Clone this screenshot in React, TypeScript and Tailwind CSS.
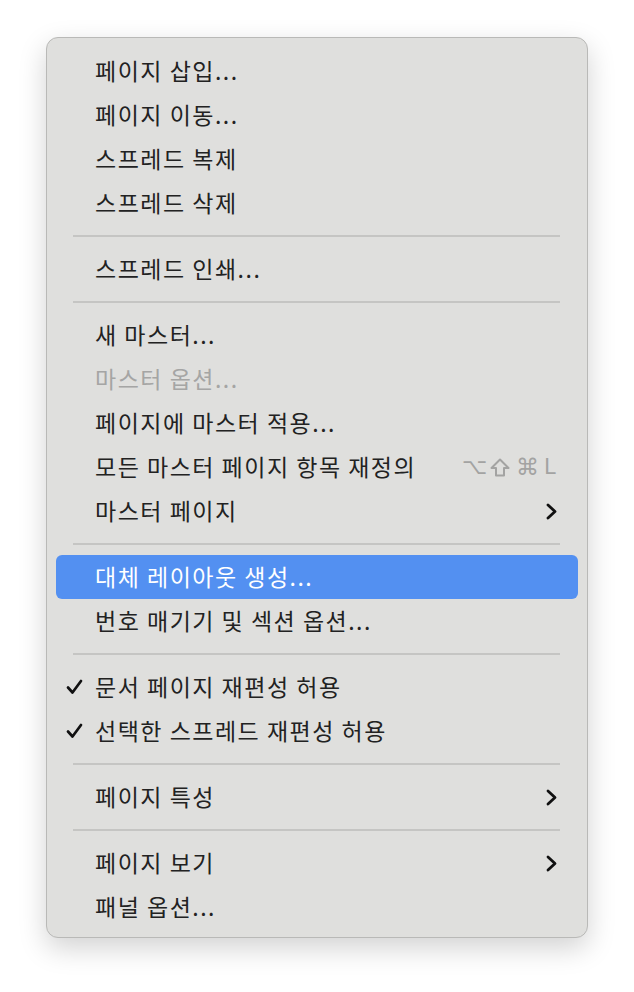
import React from 'react'

type Item =
  | { kind: 'sep' }
  | {
      kind: 'item'
      label: string
      checked?: boolean
      disabled?: boolean
      active?: boolean
      submenu?: boolean
      shortcut?: boolean
    }

const items: Item[] = [
  { kind: 'item', label: '페이지 삽입...' },
  { kind: 'item', label: '페이지 이동...' },
  { kind: 'item', label: '스프레드 복제' },
  { kind: 'item', label: '스프레드 삭제' },
  { kind: 'sep' },
  { kind: 'item', label: '스프레드 인쇄...' },
  { kind: 'sep' },
  { kind: 'item', label: '새 마스터...' },
  { kind: 'item', label: '마스터 옵션...', disabled: true },
  { kind: 'item', label: '페이지에 마스터 적용...' },
  { kind: 'item', label: '모든 마스터 페이지 항목 재정의', shortcut: true },
  { kind: 'item', label: '마스터 페이지', submenu: true },
  { kind: 'sep' },
  { kind: 'item', label: '대체 레이아웃 생성...', active: true },
  { kind: 'item', label: '번호 매기기 및 섹션 옵션...' },
  { kind: 'sep' },
  { kind: 'item', label: '문서 페이지 재편성 허용', checked: true },
  { kind: 'item', label: '선택한 스프레드 재편성 허용', checked: true },
  { kind: 'sep' },
  { kind: 'item', label: '페이지 특성', submenu: true },
  { kind: 'sep' },
  { kind: 'item', label: '페이지 보기', submenu: true },
  { kind: 'item', label: '패널 옵션...' },
]

function Check() {
  return (
    <svg width="17" height="16" viewBox="0 0 17 16" fill="none">
      <path d="M2 8.5 L6.5 13.5 L15 2" stroke="#111" strokeWidth="2.7" strokeLinecap="round" strokeLinejoin="round" />
    </svg>
  )
}

function Chevron() {
  return (
    <svg width="11" height="17" viewBox="0 0 11 17" fill="none">
      <path d="M2 2 L9 8.5 L2 15" stroke="#111" strokeWidth="2.8" strokeLinecap="round" strokeLinejoin="round" />
    </svg>
  )
}

function ShiftKey() {
  return (
    <svg width="20" height="19" viewBox="0 0 20 19" fill="none">
      <path d="M10 1.5 L18.5 10 L14 10 L14 17.5 L6 17.5 L6 10 L1.5 10 Z" stroke="#a3a3a2" strokeWidth="2" strokeLinejoin="round" />
    </svg>
  )
}

export default function App() {
  return (
    <div className="min-h-[992px] w-[634px] bg-white pt-[37px] pl-[46px]" style={{ fontFamily: '"Noto Sans CJK KR", "Noto Sans", sans-serif' }}>
      <div className="w-[542px] rounded-[12px] border border-[#b9b9b7] bg-[#dfdfdd] px-[9px] pt-[11px] pb-[8px] shadow-[0_10px_28px_rgba(0,0,0,0.18)]">
        {items.map((it, i) =>
          it.kind === 'sep' ? (
            <div key={i} className="flex h-[22px] items-center pl-[17px] pr-[18px]">
              <div className="h-[2px] w-full bg-[#c5c5c3]" />
            </div>
          ) : (
            <div
              key={i}
              className={`relative flex h-[44px] items-center rounded-[6px] pl-[39px] pr-[21px] text-[23px] ${
                it.active ? 'bg-[#5390f1] text-white' : it.disabled ? 'text-[#a5a5a4]' : 'text-[#222222]'
              }`}
            >
              {it.checked && (
                <span className="absolute left-[10px] top-[14px]">
                  <Check />
                </span>
              )}
              <span className="-mt-[2px] flex-1 leading-none tracking-[1.5px]">{it.label}</span>
              {it.shortcut && (
                <span className="-ml-[3px] flex items-center gap-[6px] text-[22px] leading-none text-[#a3a3a2]" style={{ fontFamily: '"DejaVu Sans", sans-serif' }}>
                  <span className="w-[22px] text-center">⌥</span>
                  <ShiftKey />
                  <span className="w-[22px] text-center text-[23px]">⌘</span>
                  <span className="w-[13px] text-[21px]">L</span>
                </span>
              )}
              {it.submenu && <Chevron />}
            </div>
          )
        )}
      </div>
    </div>
  )
}
